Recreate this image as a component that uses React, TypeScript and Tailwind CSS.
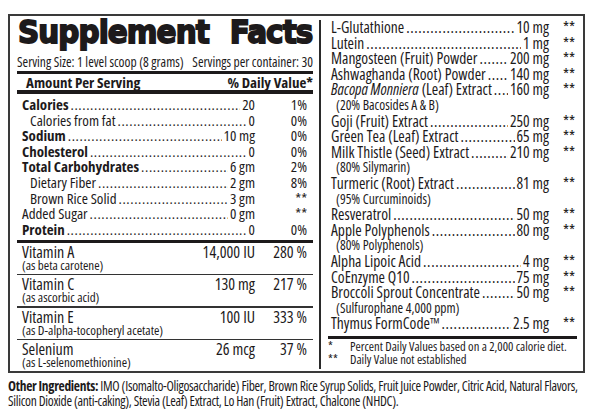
import clsx from "clsx";

const DOTS = ".".repeat(160);

function Leader() {
  return (
    <span className="mx-[2px] w-0 min-w-0 flex-1 overflow-hidden whitespace-nowrap tracking-[0.6px]">{DOTS}</span>
  );
}

function NutrientRow({ label, amount, dv, bold, indent }: { label: string; amount: string; dv: string; bold?: boolean; indent?: boolean }) {
  return (
    <div className={clsx("flex h-[15.6px] items-center whitespace-nowrap pr-[6px] leading-[15.6px]", indent ? "pl-[13px]" : "pl-[5px]")}>
      <span className={clsx(bold && "font-bold")}>{label}</span>
      <Leader />
      <span className="shrink-0">{amount}</span>
      <span className="w-[52px] shrink-0 text-right">{dv}</span>
    </div>
  );
}

function VitaminRow({ name, note, amount, dv }: { name: string; note: string; amount: string; dv: string }) {
  return (
    <div className="pb-[3px] pl-[5px] pr-[6px] pt-[3px]">
      <div className="flex h-[13px] items-center whitespace-nowrap text-[16px] leading-[13px]">
        <span className="flex-1">{name}</span>
        <span>{amount}</span>
        <span className="w-[52px] text-right">{dv}</span>
      </div>
      <div className="h-[12px] whitespace-nowrap text-[13px] leading-[12px]">{note}</div>
    </div>
  );
}

function IngredientRow({ children, amount }: { children: React.ReactNode; amount: string }) {
  return (
    <div className="flex h-[15.6px] items-center whitespace-nowrap pl-[3px] leading-[15.6px]">
      <span>{children}</span>
      <Leader />
      <span className="shrink-0">{amount}</span>
      <span className="w-[28px] shrink-0 pr-[2px] text-right">**</span>
    </div>
  );
}

function SubRow({ children }: { children: React.ReactNode }) {
  return <div className="h-[15.6px] whitespace-nowrap pl-[8px] text-[13.5px] leading-[15.6px]">{children}</div>;
}

const nutrients = [
  { label: "Calories", amount: "20", dv: "1%", bold: true },
  { label: "Calories from fat", amount: "0", dv: "0%", indent: true },
  { label: "Sodium", amount: "10 mg", dv: "0%", bold: true },
  { label: "Cholesterol", amount: "0", dv: "0%", bold: true },
  { label: "Total Carbohydrates", amount: "6 gm", dv: "2%", bold: true },
  { label: "Dietary Fiber", amount: "2 gm", dv: "8%", indent: true },
  { label: "Brown Rice Solid", amount: "3 gm", dv: "**", indent: true },
  { label: "Added Sugar", amount: "0 gm", dv: "**" },
  { label: "Protein", amount: "0", dv: "0%", bold: true },
];

const vitamins = [
  { name: "Vitamin A", note: "(as beta carotene)", amount: "14,000 IU", dv: "280 %" },
  { name: "Vitamin C", note: "(as ascorbic acid)", amount: "130 mg", dv: "217 %" },
  { name: "Vitamin E", note: "(as D-alpha-tocopheryl acetate)", amount: "100 IU", dv: "333 %" },
  { name: "Selenium", note: "(as L-selenomethionine)", amount: "26 mcg", dv: "37 %" },
];

export default function App() {
  return (
    <div className="h-[414px] w-[594px] overflow-hidden bg-white pl-[8px] pt-[14px] font-['Open_Sans',sans-serif] text-[15px] text-[#1d1a1b] [font-stretch:75%]">
      <div className="flex w-[577px] border-2 border-[#3a3a3a]">
        {/* left: nutrition */}
        <div className="ml-[7px] flex w-[296px] shrink-0 flex-col">
          <div className="ml-[1px] flex h-[32px] w-[320px] origin-left scale-x-[0.92] justify-between font-['DejaVu_Sans',sans-serif] text-[32px] font-bold leading-[32px] tracking-[-1px] [-webkit-text-stroke:1.8px_#1d1a1b] [font-stretch:100%]">
            <span>Supplement</span>
            <span>Facts</span>
          </div>
          <div className="mt-[6.5px] flex h-[15px] justify-between whitespace-nowrap text-[13.5px] leading-[15px]">
            <span>Serving Size: 1 level scoop (8 grams)</span>
            <span>Servings per container: 30</span>
          </div>
          <div className="mt-[1.5px] h-[3px] bg-[#1d1a1b]" />
          <div className="flex h-[16px] justify-between pl-[9px] text-[15px] font-bold leading-[16px]">
            <span>Amount Per Serving</span>
            <span>% Daily Value*</span>
          </div>
          <div className="h-[4px] bg-[#1d1a1b]" />
          <div className="mt-[3px]">
            {nutrients.map((n) => (
              <NutrientRow key={n.label} {...n} />
            ))}
          </div>
          <div className="mt-[2.5px] h-[3px] bg-[#1d1a1b]" />
          {vitamins.map((v, i) => (
            <div key={v.name}>
              {i > 0 && <div className="h-[1.5px] bg-[#333]" />}
              <VitaminRow {...v} />
            </div>
          ))}
        </div>

        <div className="mb-[2px] ml-[6px] mt-[4px] w-[2px] shrink-0 bg-[#2a2a2a]" />

        {/* right: proprietary ingredients */}
        <div className="flex min-w-0 flex-1 flex-col pl-[7px] pr-[6px] pt-[4px] text-[15.5px]">
          <IngredientRow amount=" 10 mg">L-Glutathione</IngredientRow>
          <IngredientRow amount="1 mg">Lutein</IngredientRow>
          <IngredientRow amount="200 mg">Mangosteen (Fruit) Powder</IngredientRow>
          <IngredientRow amount="140 mg">Ashwaghanda (Root) Powder</IngredientRow>
          <IngredientRow amount="160 mg">
            <i>Bacopa Monniera</i> (Leaf) Extract
          </IngredientRow>
          <SubRow>(20% Bacosides A &amp; B)</SubRow>
          <IngredientRow amount="250 mg">Goji (Fruit) Extract</IngredientRow>
          <IngredientRow amount="65 mg">Green Tea (Leaf) Extract</IngredientRow>
          <IngredientRow amount="210 mg">Milk Thistle (Seed) Extract</IngredientRow>
          <SubRow>(80% Silymarin)</SubRow>
          <IngredientRow amount="81 mg">Turmeric (Root) Extract</IngredientRow>
          <SubRow>(95% Curcuminoids)</SubRow>
          <IngredientRow amount="50 mg">Resveratrol</IngredientRow>
          <IngredientRow amount="80 mg">Apple Polyphenols</IngredientRow>
          <SubRow>(80% Polyphenols)</SubRow>
          <IngredientRow amount="4 mg">Alpha Lipoic Acid</IngredientRow>
          <IngredientRow amount="75 mg">CoEnzyme Q10</IngredientRow>
          <IngredientRow amount="50 mg">Broccoli Sprout Concentrate</IngredientRow>
          <SubRow>(Sulfurophane 4,000 ppm)</SubRow>
          <IngredientRow amount="2.5 mg">Thymus FormCode™</IngredientRow>
          <div className="mt-[4px] h-[3px] bg-[#1d1a1b]" />
          <div className="mt-[2.5px] whitespace-nowrap text-[12.6px] leading-[12.5px]">
            <div className="flex">
              <span className="w-[22px]">*</span>
              <span>Percent Daily Values based on a 2,000 calorie diet.</span>
            </div>
            <div className="flex">
              <span className="w-[22px]">**</span>
              <span>Daily Value not established</span>
            </div>
          </div>
        </div>
      </div>

      <div className="mt-[5.5px] whitespace-nowrap text-[13.5px] leading-[15px] tracking-[-0.3px]">
        <div>
          <span className="font-bold">Other Ingredients:</span> IMO (Isomalto-Oligosaccharide) Fiber, Brown Rice Syrup Solids, Fruit Juice Powder, Citric Acid, Natural Flavors,
        </div>
        <div>Silicon Dioxide (anti-caking), Stevia (Leaf) Extract, Lo Han (Fruit) Extract, Chalcone (NHDC).</div>
      </div>
    </div>
  );
}
